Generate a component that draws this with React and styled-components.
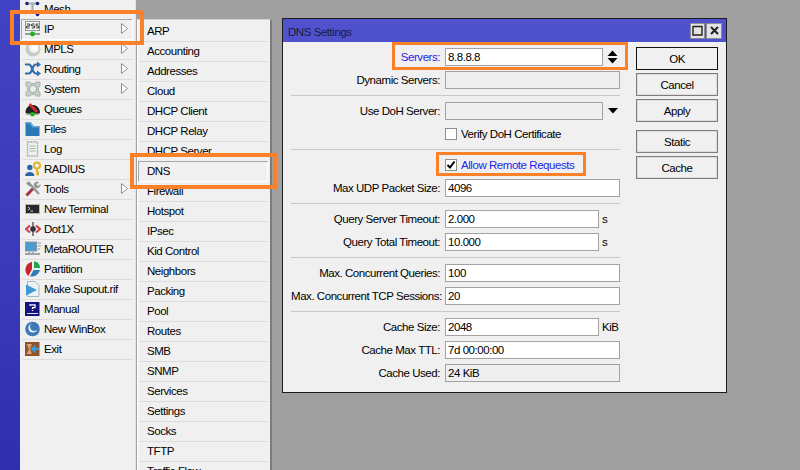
import React from "react";
import styled, { createGlobalStyle } from "styled-components";

const Global = createGlobalStyle`
  html, body { margin: 0; padding: 0; background: #a0a0a0; }
  * { box-sizing: border-box; }
`;

const Page = styled.div`
  position: relative;
  width: 800px;
  height: 470px;
  overflow: hidden;
  display: flex;
  background: #a0a0a0;
  font-family: "Liberation Sans", Arial, sans-serif;
  font-size: 11.5px;
  letter-spacing: -0.45px;
  color: #000;
`;

const Strip = styled.div`
  width: 20px;
  background: linear-gradient(180deg, #4242c4 0%, #3a3abb 55%, #3030ae 100%);
`;

const SideMenu = styled.nav`
  width: 116px;
  padding: 0 2px 0 1px;
  background: #f0f0f0;
  border-right: 1px solid #e2e2e2;
`;

const Row = styled.div`
  position: relative;
  height: 20px;
  display: flex;
  align-items: center;
  gap: 3px;
  padding: 0 0 1px 3px;
  white-space: nowrap;
  margin-left: ${(p) => (p.$active ? "0" : "1px")};
  border-bottom: 1px solid #dcdcdc;
  ${(p) =>
    p.$active &&
    `
    border-top: 1px solid #a6a6a6;
    border-left: 1px solid #a6a6a6;
    border-right: 1px solid #fff;
    border-bottom: 1px solid #fff;
    padding: 0 0 1px 3px;
    margin-top: -1px;
    height: 21px;
  `}
`;

const Arrow = styled.svg`
  position: absolute;
  left: 99px;
  top: 3px;
`;

const SubMenu = styled.nav`
  position: absolute;
  left: 137px;
  top: 19px;
  width: 135px;
  height: 470px;
  padding: 2px 2px 0 1px;
  background: #f0f0f0;
  border-top: 1px solid #d0d0d0;
  border-left: 1px solid #fff;
  border-right: 2px solid #7c7c7c;
`;

const SubRow = styled.div`
  height: 20px;
  display: flex;
  align-items: center;
  padding: 0 0 1px 8px;
  white-space: nowrap;
  border-bottom: 1px solid #dcdcdc;
  ${(p) =>
    p.$active &&
    `
    border: 1px solid #a6a6a6;
    border-right-color: #fff;
    border-bottom-color: #fff;
    height: 21px;
    margin: -1px 0 0 -1px;
    padding: 0 0 1px 8px;
  `}
`;

const Win = styled.section`
  position: absolute;
  left: 282px;
  top: 18px;
  width: 445px;
  height: 375px;
  background: #f0f0f0;
  border: 1px solid #1c1c1c;
`;

const TitleBar = styled.header`
  height: 23px;
  background: #4f52cc;
  display: flex;
  align-items: center;
  justify-content: space-between;
  padding: 0 4px 0 5px;
  color: #1c1c3c;
`;

const TitleText = styled.span`
  padding-top: 2px;
`;

const TitleButtons = styled.div`
  display: flex;
  gap: 1px;
`;

const TitleButton = styled.div`
  width: ${(p) => p.$w ?? 15}px;
  height: 16px;
  background: #e4e4e4;
  border: 1px solid #8c8c9c;
  display: flex;
  align-items: center;
  justify-content: center;
`;

const WinBody = styled.div`
  display: flex;
  gap: 16px;
  padding: 0 8px;
`;

const Form = styled.div`
  width: 329px;
  flex: none;
`;

const Section = styled.div`
  display: flex;
  flex-direction: column;
  gap: 5px;
  padding: ${(p) => p.$pt ?? 6}px 0 6px;
  border-bottom: ${(p) => (p.$last ? "none" : "1px solid #c8c8c8")};
`;

const FormRow = styled.div`
  height: ${(p) => p.$h ?? 18}px;
  display: flex;
  align-items: center;
`;

const Label = styled.div`
  width: 149px;
  flex: none;
  text-align: right;
  white-space: nowrap;
  color: ${(p) => (p.$blue ? "#1f1fe8" : "#000")};
`;

const Field = styled.div`
  margin-left: 5px;
  width: ${(p) => p.$w ?? 175}px;
  height: 18px;
  line-height: 16px;
  padding-left: 2px;
  flex: none;
  background: ${(p) => (p.$off ? "#efefef" : "#fff")};
  border: 1px solid #a2a2a2;
`;

const Unit = styled.span`
  margin-left: 3px;
`;

const Check = styled.div`
  margin-left: 5px;
  width: 12px;
  height: 12px;
  flex: none;
  background: #fff;
  border: 1px solid #8e8e8e;
  display: flex;
  align-items: center;
  justify-content: center;
`;

const CheckText = styled.span`
  margin-left: 4px;
  color: ${(p) => (p.$blue ? "#1f1fe8" : "#000")};
`;

const Glyph = styled.svg`
  margin-left: ${(p) => p.$ml ?? 5}px;
  flex: none;
`;

const Buttons = styled.div`
  width: 82px;
  flex: none;
  padding-top: 5px;
  display: flex;
  flex-direction: column;
  gap: 3px;
`;

const Btn = styled.div`
  height: 23px;
  display: flex;
  align-items: center;
  justify-content: center;
  background: #f0f0f0;
  border: 1px solid ${(p) => (p.$primary ? "#111" : "#7e7e7e")};
  box-shadow: ${(p) => (p.$primary ? "none" : "inset 0 0 0 1px #dcdcdc")};
  margin-top: ${(p) => (p.$apart ? "5px" : "0")};
`;

const Callout = styled.div`
  position: absolute;
  left: ${(p) => p.$x}px;
  top: ${(p) => p.$y}px;
  width: ${(p) => p.$w}px;
  height: ${(p) => p.$h}px;
  border: ${(p) => p.$t ?? 3}px solid #fb8128;
  pointer-events: none;
`;

const Svg = ({ children }) => (
  <svg width="16" height="16" viewBox="0 0 16 16" style={{ flex: "none" }}>
    {children}
  </svg>
);

const icons = {
  mesh: (
    <Svg>
      <path d="M2 2.5H12M7.5 2.5V13" stroke="#a5aeb0" strokeWidth="2.2" fill="none" />
      <circle cx="2" cy="2.5" r="1.8" fill="#16218a" />
      <circle cx="12.5" cy="2.5" r="1.8" fill="#16218a" />
      <circle cx="12.5" cy="13.5" r="1.8" fill="#16218a" />
    </Svg>
  ),
  ip: (
    <Svg>
      <rect x="0.5" y="0.5" width="14" height="9" fill="#fff" stroke="#8b9a8d" />
      <path d="M2 3h3v2H2v2h3M7 3H10M7 3v2h3v2H7M11.5 3h2.5M11.5 3v2h2.5v2h-2.5" stroke="#333" strokeWidth="1" fill="none" transform="translate(-0.3 0)" />
      <path d="M0 13H15" stroke="#6c7d70" strokeWidth="1.4" />
      <circle cx="7.5" cy="13" r="2.4" fill="#21b021" />
    </Svg>
  ),
  mpls: (
    <Svg>
      <circle cx="8" cy="8" r="7.5" fill="#c6cbc6" />
      <circle cx="9" cy="7" r="5" fill="#f2f2ee" />
      <circle cx="9.5" cy="7" r="2.5" fill="#fff" />
    </Svg>
  ),
  routing: (
    <Svg>
      <path d="M0 3.5H4C7.5 3.5 7 12.5 11 12.5H13M0 12.5H4C7.5 12.5 7 3.5 11 3.5H13" stroke="#2f6ea8" strokeWidth="2.2" fill="none" />
      <path d="M12 0.5L16 3.5L12 6.5ZM12 9.5L16 12.5L12 15.5Z" fill="#2f6ea8" />
    </Svg>
  ),
  system: (
    <Svg>
      <path d="M1 1H5L6 2.5H10L11 1H15V5L13.5 6V10L15 11V15H11L10 13.5H6L5 15H1V11L2.5 10V6L1 5Z" fill="#c6cec8" stroke="#a9b2ac" />
      <circle cx="8" cy="8" r="3.6" fill="#eef0ee" stroke="#a9b2ac" strokeWidth="1.4" />
    </Svg>
  ),
  queues: (
    <Svg>
      <path d="M0.5 11.5C0.5 1.5 15 1.5 15 11.5C15 13 13 12.6 7.7 12.6C3 12.6 0.5 13 0.5 11.5Z" fill="#222" />
      <path d="M4.5 3L12 11" stroke="#d72a35" strokeWidth="2.6" />
      <path d="M1 13H14" stroke="#666" strokeWidth="1" />
      <circle cx="7.5" cy="13.3" r="2.3" fill="#1fae1f" />
    </Svg>
  ),
  files: (
    <Svg>
      <path d="M0.5 1H5.5L8.5 5H14.5V15H0.5Z" fill="#2a7ab8" />
      <path d="M0.5 1H5.5L8.5 5H14.5V6.5H7.5L4.5 2.5H0.5Z" fill="#5fa5d6" />
    </Svg>
  ),
  log: (
    <Svg>
      <rect x="2.5" y="1" width="10" height="14" fill="#eef1ec" stroke="#aab5ac" strokeWidth="1.3" strokeDasharray="2 0.6" />
      <path d="M4.5 5H10.5M4.5 7.5H10.5M4.5 10H10.5" stroke="#a9b4ab" strokeWidth="1.2" />
    </Svg>
  ),
  radius: (
    <Svg>
      <circle cx="4.8" cy="6.5" r="2.7" fill="#2a67a8" />
      <path d="M0 15C0 9.5 9.5 9.5 9.5 15Z" fill="#2a67a8" />
      <circle cx="12" cy="4.5" r="3" fill="none" stroke="#dcb62a" strokeWidth="2" />
      <path d="M12 7V14M12 11.5H14M12 13.5H14" stroke="#dcb62a" strokeWidth="1.8" />
    </Svg>
  ),
  tools: (
    <Svg>
      <path d="M1.5 14.5L8.5 7" stroke="#a93344" strokeWidth="3" />
      <path d="M3 1L14 13" stroke="#8f9a92" strokeWidth="2.4" />
      <path d="M9 5C8 2 11 0 14 1L11.5 3.5L13 5L15.5 3C16 6 13 8 10.5 7Z" fill="#8f9a92" />
      <path d="M1 2.5L3 0.5L6 4L4.5 5.5Z" fill="#8f9a92" />
    </Svg>
  ),
  terminal: (
    <Svg>
      <rect x="0" y="3" width="15" height="10" fill="#b9b9b0" />
      <rect x="1" y="4" width="13" height="8" fill="#27292a" />
      <path d="M3 6L5 7.5L3 9M5.5 10H8" stroke="#e5e5e5" strokeWidth="0.9" fill="none" />
    </Svg>
  ),
  dot1x: (
    <Svg>
      <path d="M5 4.5L1 8L5 11.5M11 4.5L15 8L11 11.5" fill="none" stroke="#cc3c46" strokeWidth="2" />
      <path d="M8 1V15" stroke="#333" strokeWidth="1.2" />
      <circle cx="8" cy="8" r="2.8" fill="#333" />
    </Svg>
  ),
  meta: (
    <Svg>
      <rect x="0.5" y="1" width="11" height="9" fill="#4b9ad2" stroke="#8a979c" />
      <path d="M0 13H15" stroke="#9aa5a8" strokeWidth="2" />
      <path d="M4 11V12M8 11V12" stroke="#8a979c" strokeWidth="1.5" />
      <path d="M12.5 2H16M12.5 5H16M12.5 8H15" stroke="#a9b2b5" strokeWidth="1.6" />
    </Svg>
  ),
  partition: (
    <Svg>
      <path d="M7 1C2 2 0 6 0.5 10C1 12.5 2.5 14.5 3.5 15L7 8Z" fill="#c5232e" />
      <path d="M9 0.5C12.5 0.5 15 3 15 7L9 7Z" fill="#20a64a" />
      <path d="M5 15.5C9 16 13.5 14 15 9L8.5 9Z" fill="#2e7cb8" />
    </Svg>
  ),
  supout: (
    <Svg>
      <path d="M2.5 0.5H10L14 4.5V15.5H2.5Z" fill="#eef3f6" stroke="#9fb6c6" />
      <path d="M1 3.5L12 9L1 14.5Z" fill="#3d9ad6" />
    </Svg>
  ),
  manual: (
    <Svg>
      <rect x="0" y="1" width="14.5" height="14" fill="#14147e" />
      <path d="M5 5V3.8H10V6.6H7.5V8M7.5 9V10" stroke="#fff" strokeWidth="1.3" fill="none" />
      <path d="M2 12.5H13" stroke="#dcdcef" strokeWidth="1" />
    </Svg>
  ),
  winbox: (
    <Svg>
      <circle cx="7.5" cy="8" r="7.3" fill="#3f79b4" />
      <circle cx="8" cy="7" r="4.6" fill="#e8f0f8" />
      <circle cx="9.2" cy="5.8" r="4.2" fill="#3f79b4" />
    </Svg>
  ),
  exit: (
    <Svg>
      <rect x="0" y="1" width="14.5" height="14" fill="#93512a" />
      <path d="M1.5 3H7L5 8L7 13H1.5L4 8Z" fill="#d9a076" />
      <path d="M14 8H9" stroke="#3a9ad8" strokeWidth="2.4" />
      <path d="M5.5 8L10.5 3.5V12.5Z" fill="#3a9ad8" />
    </Svg>
  ),
};

const menu = [
  ["Mesh", "mesh"],
  ["IP", "ip", true],
  ["MPLS", "mpls", true],
  ["Routing", "routing", true],
  ["System", "system", true],
  ["Queues", "queues"],
  ["Files", "files"],
  ["Log", "log"],
  ["RADIUS", "radius"],
  ["Tools", "tools", true],
  ["New Terminal", "terminal"],
  ["Dot1X", "dot1x"],
  ["MetaROUTER", "meta"],
  ["Partition", "partition"],
  ["Make Supout.rif", "supout"],
  ["Manual", "manual"],
  ["New WinBox", "winbox"],
  ["Exit", "exit"],
];

const sub = ["ARP", "Accounting", "Addresses", "Cloud", "DHCP Client", "DHCP Relay", "DHCP Server", "DNS", "Firewall", "Hotspot", "IPsec", "Kid Control", "Neighbors", "Packing", "Pool", "Routes", "SMB", "SNMP", "Services", "Settings", "Socks", "TFTP", "Traffic Flow"];

const Input = ({ label, value, off, unit, w, blue, children }) => (
  <FormRow>
    <Label $blue={blue}>{label}</Label>
    <Field $off={off} $w={w}>{value}</Field>
    {unit && <Unit>{unit}</Unit>}
    {children}
  </FormRow>
);

export default function App() {
  return (
    <Page>
      <Global />
      <Strip />
      <SideMenu>
        {menu.map(([name, icon, more]) => (
          <Row key={name} $active={name === "IP"}>
            {icons[icon]}
            <span>{name}</span>
            {more && (
              <Arrow width="8" height="11" viewBox="0 0 8 11">
                <path d="M0.5 0.5L6.5 5.5L0.5 10.5Z" fill="#fff" stroke="#8e8e8e" />
              </Arrow>
            )}
          </Row>
        ))}
      </SideMenu>
      <SubMenu>
        {sub.map((s) => (
          <SubRow key={s} $active={s === "DNS"}>{s}</SubRow>
        ))}
      </SubMenu>
      <Win>
        <TitleBar>
          <TitleText>DNS Settings</TitleText>
          <TitleButtons>
            <TitleButton>
              <svg width="11" height="11" viewBox="0 0 11 11"><path d="M1 1.5H10M1 1V10H10V1" fill="none" stroke="#222" strokeWidth="1.4" /></svg>
            </TitleButton>
            <TitleButton $w={16}>
              <svg width="9" height="9" viewBox="0 0 9 9"><path d="M1 1L8 8M8 1L1 8" stroke="#222" strokeWidth="2" /></svg>
            </TitleButton>
          </TitleButtons>
        </TitleBar>
        <WinBody>
          <Form>
            <Section>
              <Input label="Servers:" value="8.8.8.8" w={158} blue>
                <Glyph $ml={4} width="11" height="14" viewBox="0 0 11 14">
                  <path d="M5.5 0.5L10.5 6H0.5ZM0.5 8H10.5L5.5 13.5Z" fill="#000" />
                </Glyph>
              </Input>
              <Input label="Dynamic Servers:" value="" off />
            </Section>
            <Section>
              <Input label="Use DoH Server:" value="" off w={158}>
                <Glyph $ml={5} width="10" height="6" viewBox="0 0 10 6">
                  <path d="M0 0H10L5 5.5Z" fill="#000" />
                </Glyph>
              </Input>
              <FormRow>
                <Label />
                <Check />
                <CheckText>Verify DoH Certificate</CheckText>
              </FormRow>
            </Section>
            <Section $pt={5}>
              <FormRow $h={19}>
                <Label />
                <Check>
                  <svg width="10" height="10" viewBox="0 0 10 10"><path d="M1.5 5L4 7.5L8.5 1.5" fill="none" stroke="#000" strokeWidth="2" /></svg>
                </Check>
                <CheckText $blue>Allow Remote Requests</CheckText>
              </FormRow>
              <Input label="Max UDP Packet Size:" value="4096" />
            </Section>
            <Section>
              <Input label="Query Server Timeout:" value="2.000" w={154} unit="s" />
              <Input label="Query Total Timeout:" value="10.000" w={154} unit="s" />
            </Section>
            <Section>
              <Input label="Max. Concurrent Queries:" value="100" />
              <Input label="Max. Concurrent TCP Sessions:" value="20" />
            </Section>
            <Section $last>
              <Input label="Cache Size:" value="2048" w={154} unit="KiB" />
              <Input label="Cache Max TTL:" value="7d 00:00:00" />
              <Input label="Cache Used:" value="24 KiB" off />
            </Section>
          </Form>
          <Buttons>
            <Btn $primary>OK</Btn>
            <Btn>Cancel</Btn>
            <Btn>Apply</Btn>
            <Btn $apart>Static</Btn>
            <Btn>Cache</Btn>
          </Buttons>
        </WinBody>
      </Win>
      <Callout $x={10} $y={10} $w={134} $h={35} $t={4} />
      <Callout $x={130} $y={153} $w={147} $h={36} $t={4} />
      <Callout $x={392} $y={42} $w={236} $h={28} />
      <Callout $x={436} $y={152} $w={150} $h={24} />
    </Page>
  );
}
